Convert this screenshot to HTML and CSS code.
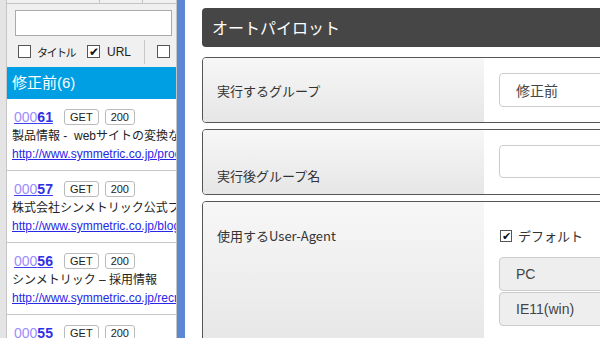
FILE: index.html
```html
<!DOCTYPE html>
<html lang="ja">
<head>
<meta charset="utf-8">
<link rel="stylesheet" href="styles.css">
</head>
<body>
<div class="app">
  <div class="edge"></div>
  <aside class="panel">
    <div class="tabs"><span class="tab t1"></span><span class="tab t2"></span><span class="tab t3"></span></div>
    <div class="search"><input class="search-input" type="text"></div>
    <div class="filters">
      <label class="opt"><span class="cb"></span><span class="jp">タイトル</span></label>
      <label class="opt opt-url"><span class="cb on">✔</span>URL</label>
      <span class="vsep"></span>
      <span class="cb"></span>
    </div>
    <div class="group">修正前(6)</div>
    <ul class="list">
      <li class="item">
        <div class="idrow"><a class="id"><span class="pre">000</span><b>61</b></a><span class="badge">GET</span><span class="badge">200</span></div>
        <div class="title">製品情報 -&nbsp; webサイトの変換なし</div>
        <a class="url">http://www.symmetric.co.jp/products/</a>
      </li>
      <li class="item">
        <div class="idrow"><a class="id"><span class="pre">000</span><b>57</b></a><span class="badge">GET</span><span class="badge">200</span></div>
        <div class="title">株式会社シンメトリック公式ブログ</div>
        <a class="url">http://www.symmetric.co.jp/blog/</a>
      </li>
      <li class="item">
        <div class="idrow"><a class="id"><span class="pre">000</span><b>56</b></a><span class="badge">GET</span><span class="badge">200</span></div>
        <div class="title">シンメトリック – 採用情報</div>
        <a class="url">http://www.symmetric.co.jp/recruit/</a>
      </li>
      <li class="item">
        <div class="idrow"><a class="id"><span class="pre">000</span><b>55</b></a><span class="badge">GET</span><span class="badge">200</span></div>
        <div class="title">シンメトリック</div>
        <a class="url">http://www.symmetric.co.jp/</a>
      </li>
    </ul>
  </aside>
  <div class="scrollbar"></div>
  <main class="main">
    <div class="main-inner">
      <div class="header">オートパイロット</div>
      <div class="row row1">
        <div class="label">実行するグループ</div>
        <div class="field"><div class="select">修正前</div></div>
      </div>
      <div class="row row2">
        <div class="label">実行後グループ名</div>
        <div class="field"><div class="textbox"></div></div>
      </div>
      <div class="row row3">
        <div class="label">使用するUser-Agent</div>
        <div class="field">
          <label class="def"><span class="cb on small">✔</span>デフォルト</label>
          <div class="btn">PC</div>
          <div class="btn">IE11(win)</div>
        </div>
      </div>
    </div>
  </main>
</div>
</body>
</html>
```

FILE: styles.css
```css
* { box-sizing: border-box; }
html, body { margin: 0; padding: 0; }
body {
  width: 600px;
  height: 338px;
  overflow: hidden;
  background: #fff;
  font-family: "Liberation Sans", Arial, "Noto Sans CJK JP", sans-serif;
  color: #222;
}
.app { display: flex; height: 338px; }
.edge {
  width: 7px;
  flex: none;
  background: #e4e4e4;
  border-right: 1px solid #c6c6c6;
}
.panel {
  width: 170px;
  flex: none;
  background: #f0f0f0;
  border-right: 1px solid #c4c4c4;
  overflow: hidden;
}
.tabs {
  height: 4px;
  display: flex;
  border-bottom: 1px solid #c4c4c4;
}
.tab { height: 3px; }
.t1 { width: 93px; border-right: 1px solid #c4c4c4; }
.t2 { width: 43px; border-right: 1px solid #c4c4c4; }
.search { padding: 6px 4px 0 8px; }
.search-input {
  display: block;
  width: 157px;
  height: 26px;
  margin: 0;
  border: 1px solid #aaa;
  background: #fff;
  outline: none;
}
.filters {
  display: flex;
  align-items: center;
  height: 27px;
  margin-top: 2px;
  padding-left: 11px;
  font-size: 12px;
  color: #222;
  white-space: nowrap;
}
.opt { display: flex; align-items: center; gap: 6px; flex: none; }
.jp { font-size: 11px; letter-spacing: -1.5px; }
.opt-url { margin-left: 12px; gap: 7px; }
.cb {
  width: 13px;
  height: 13px;
  flex: none;
  border: 1px solid #555;
  background: #fff;
  display: inline-flex;
  align-items: center;
  justify-content: center;
  font-size: 12px;
  line-height: 1;
  color: #111;
}
.vsep {
  width: 1px;
  height: 24px;
  flex: none;
  background: #c8c8c8;
  margin: 0 12px 0 13px;
}
.group {
  height: 32px;
  margin-top: 2px;
  background: #009ee2;
  color: #fff;
  font-size: 15px;
  line-height: 32px;
  padding-left: 5px;
  font-family: "Liberation Sans", "Noto Sans CJK JP", sans-serif;
}
.list { list-style: none; margin: 0; padding: 0; background: #fff; }
.item {
  height: 72px;
  padding: 9px 0 0 5px;
  border-bottom: 1px solid #c8c8c8;
  white-space: nowrap;
  overflow: hidden;
}
.idrow { display: flex; align-items: center; height: 18px; }
.id {
  font-size: 14px;
  text-decoration: underline;
  color: #3b3bf0;
  width: 52px;
  flex: none;
  padding-left: 2px;
}
.id .pre { color: #9b8cff; }
.id b { color: #3030e6; }
.badge {
  font-size: 11px;
  color: #222;
  border: 1px solid #bbb;
  border-radius: 3px;
  height: 16px;
  line-height: 14px;
  padding: 0 5px;
  margin-right: 6px;
  background: #fff;
}
.title {
  font-size: 12px;
  line-height: 18px;
  margin-top: 1px;
  color: #222;
}
.url {
  display: block;
  font-size: 12px;
  line-height: 19px;
  color: #2727e8;
  text-decoration: underline;
}
.scrollbar {
  width: 8px;
  flex: none;
  background: #5b87d5;
}
.main {
  flex: 1;
  overflow: hidden;
  padding: 8px 0 0 17px;
}
.main-inner { width: 460px; }
.header {
  height: 39px;
  background: #464646;
  color: #fff;
  border-radius: 4px;
  font-size: 16px;
  line-height: 39px;
  padding-left: 10px;
  font-family: "Noto Sans CJK JP", sans-serif;
}
.row {
  display: flex;
  border: 1px solid #555;
  border-radius: 4px;
  margin-top: 6px;
  overflow: hidden;
  font-size: 13px;
  color: #333;
}
.row1 { margin-top: 10px; height: 66px; }
.row2 { height: 66px; }
.row3 { height: 150px; }
.label {
  width: 281px;
  flex: none;
  background: linear-gradient(#f7f7f7, #e6e6e6);
  padding-left: 14px;
  font-family: "Noto Sans CJK JP", sans-serif;
}
.row1 .label { display: flex; align-items: center; }
.row2 .label { padding-top: 36px; }
.row3 .label { padding-top: 24px; }
.field { flex: 1; padding: 15px 0 0 15px; background: #fff; }
.select, .textbox {
  height: 34px;
  border: 1px solid #ccc;
  border-radius: 4px;
  font-size: 14px;
  line-height: 32px;
  padding-left: 16px;
  color: #444;
  font-family: "Noto Sans CJK JP", sans-serif;
}
.textbox { height: 33px; }
.row3 .field { padding-top: 24px; }
.def {
  display: flex;
  align-items: center;
  gap: 6px;
  margin-left: 1px;
  font-family: "Noto Sans CJK JP", sans-serif;
  color: #333;
}
.small { width: 12px; height: 12px; font-size: 11px; }
.btn {
  height: 34px;
  margin-top: 12px;
  background: #eee;
  border: 1px solid #ccc;
  border-radius: 4px;
  font-size: 14px;
  line-height: 32px;
  padding-left: 16px;
  color: #444;
}
.btn + .btn { margin-top: 1px; }
```
